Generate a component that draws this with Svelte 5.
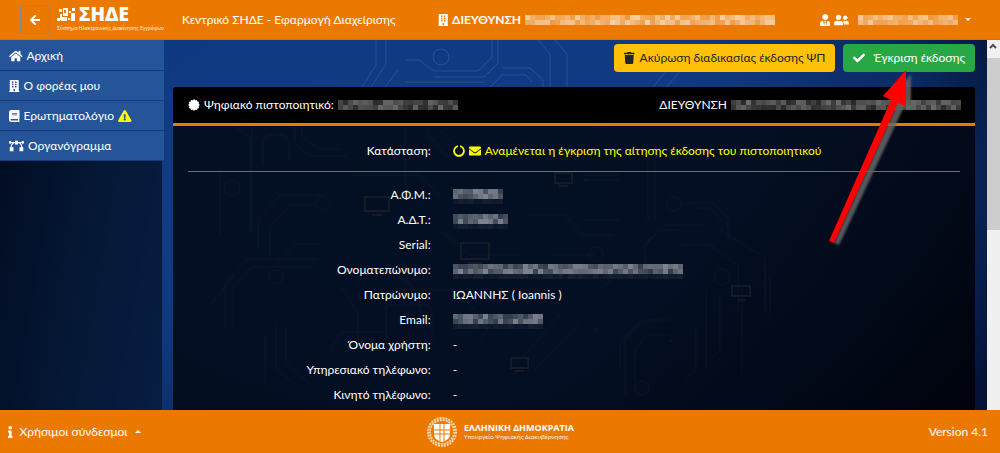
<script>
	const icons = {
		back: [448, 'M257.5 445.1l-22.2 22.2c-9.4 9.4-24.6 9.4-33.9 0L7 273c-9.4-9.4-9.4-24.6 0-33.9L201.4 44.7c9.4-9.4 24.6-9.4 33.9 0l22.2 22.2c9.5 9.5 9.3 25-.4 34.3L136.6 216H424c13.3 0 24 10.7 24 24v32c0 13.3-10.7 24-24 24H136.6l120.5 114.8c9.8 9.3 10 24.8.4 34.3z'],
		home: [576, 'M280.37 148.26L96 300.11V464a16 16 0 0 0 16 16l112.06-.29a16 16 0 0 0 15.92-16V368a16 16 0 0 1 16-16h64a16 16 0 0 1 16 16v95.64a16 16 0 0 0 16 16.05L464 480a16 16 0 0 0 16-16V300L295.67 148.26a12.19 12.19 0 0 0-15.3 0zM571.6 251.47L488 182.56V44.05a12 12 0 0 0-12-12h-56a12 12 0 0 0-12 12v72.61L318.47 43a48 48 0 0 0-61 0L4.34 251.47a12 12 0 0 0-1.6 16.9l25.5 31A12 12 0 0 0 45.15 301l235.22-193.74a12.19 12.19 0 0 1 15.3 0L530.9 301a12 12 0 0 0 16.9-1.6l25.5-31a12 12 0 0 0-1.7-16.93z'],
		building: [448, 'M436 480h-20V24c0-13-11-24-24-24H56C43 0 32 11 32 24v456H12c-7 0-12 5-12 12v20h448v-20c0-7-5-12-12-12zM128 64h64v64h-64zM256 64h64v64h-64zM128 160h64v64h-64zM256 160h64v64h-64zM128 256h64v64h-64zM256 256h64v64h-64zM192 384h64v96h-64z'],
		book: [448, 'M448 360V24c0-13.3-10.7-24-24-24H96C43 0 0 43 0 96v320c0 53 43 96 96 96h328c13.3 0 24-10.7 24-24v-16c0-7.5-3.5-14.3-8.9-18.7-4.2-15.4-4.2-59.3 0-74.7 5.4-4.3 8.9-11.1 8.9-18.6zM128 134c0-3.3 2.7-6 6-6h212c3.3 0 6 2.7 6 6v20c0 3.3-2.7 6-6 6H134c-3.3 0-6-2.7-6-6v-20zm0 64c0-3.3 2.7-6 6-6h212c3.3 0 6 2.7 6 6v20c0 3.3-2.7 6-6 6H134c-3.3 0-6-2.7-6-6v-20zm253.4 250H96c-17.7 0-32-14.3-32-32 0-17.6 14.4-32 32-32h285.4c-1.9 17.1-1.9 46.9 0 64z'],
		warning: [576, 'M569.5 440C588 472 564.800 512 527.900 512H48C11.100 512-11.900 472 6.500 440L246.400 24c18.500-32 64.700-32 83.200 0l239.900 416zM288 354c-25.400 0-46 20.600-46 46s20.600 46 46 46 46-20.600 46-46-20.600-46-46-46zm-43.700-165.300l7.400 136c.4 6.300 5.600 11.300 12 11.300h48.600c6.400 0 11.600-5 12-11.300l7.400-136c.4-6.900-5.100-12.700-12-12.700h-63.400c-6.900 0-12.400 5.800-12 12.700z'],
		curve: [640, 'M256 32h128v48h150a56 56 0 1 1 0 40h-52c56 42 84 104 91 184h35v176H448V304h76c-8-78-44-136-116-164h-24v52H256v-52h-24c-72 28-108 86-116 164h76v176H32V304h35c7-80 35-142 91-184h-52a56 56 0 1 1 0-40h150z'],
		check: [512, 'M173.900 439.400l-166.400-166.400c-10-10-10-26.200 0-36.200l36.200-36.200c10-10 26.200-10 36.200 0L192 312.700 432.100 72.600c10-10 26.200-10 36.200 0l36.200 36.200c10 10 10 26.200 0 36.200l-294.400 294.400c-10 10-26.200 10-36.200 0z'],
		trash: [448, 'M432 32H312l-9.4-18.7A24 24 0 0 0 281.1 0H166.800a23.720 23.720 0 0 0-21.4 13.3L136 32H16A16 16 0 0 0 0 48v32a16 16 0 0 0 16 16h416a16 16 0 0 0 16-16V48a16 16 0 0 0-16-16zM53.2 467a48 48 0 0 0 47.9 45h245.800a48 48 0 0 0 47.900-45L416 128H32z'],
		envelope: [512, 'M502.3 190.8c3.9-3.1 9.7-.2 9.7 4.7V400c0 26.5-21.5 48-48 48H48c-26.5 0-48-21.5-48-48V195.6c0-5 5.7-7.8 9.7-4.7 22.4 17.4 52.1 39.5 154.1 113.6 21.1 15.4 56.700 47.8 92.2 47.6 35.700.3 72-32.800 92.300-47.600 102-74.100 131.600-96.300 154-113.700zM256 320c23.200.4 56.600-29.200 73.400-41.400 132.700-96.300 142.800-104.700 173.400-128.700 5.800-4.500 9.200-11.500 9.200-18.900v-19c0-26.500-21.500-48-48-48H48c-26.500 0-48 21.500-48 48v19c0 7.400 3.400 14.300 9.200 18.900 30.600 23.900 40.700 32.400 173.400 128.700 16.800 12.200 50.200 41.800 73.400 41.400z'],
		notch: [512, 'M300 12v68c76 20 130 88 130 170 0 98-78 176-174 176S82 348 82 250c0-82 54-150 130-170V12C96 32 8 132 8 254c0 138 110 250 248 250s248-112 248-250C504 132 416 32 300 12z'],
		official: [448, 'M224 256c70.7 0 128-57.3 128-128S294.7 0 224 0 96 57.3 96 128s57.3 128 128 128zm95.8 32.6L272 480l-32-136 32-56h-96l32 56-32 136-47.8-191.4C56.9 292 0 350.3 0 422.4V464c0 26.500 21.500 48 48 48h352c26.500 0 48-21.500 48-48v-41.600c0-72.100-56.900-130.400-128.200-133.800z'],
		users: [640, 'M192 256c61.900 0 112-50.100 112-112S253.900 32 192 32 80 82.100 80 144s50.100 112 112 112zm76.800 32h-8.300c-20.800 10-43.900 16-68.500 16s-47.600-6-68.500-16h-8.300C51.600 288 0 339.600 0 403.200V432c0 26.500 21.500 48 48 48h288c26.500 0 48-21.500 48-48v-28.800c0-63.600-51.600-115.200-115.200-115.200zM480 256c53 0 96-43 96-96s-43-96-96-96-96 43-96 96 43 96 96 96zm48 32h-3.800c-13.900 4.800-28.600 8-44.200 8s-30.300-3.200-44.200-8H432c-20.400 0-39.200 5.900-55.700 15.400 24.400 26.300 39.700 61.200 39.700 99.800v38.400c0 2.200-.5 4.300-.6 6.400H592c26.500 0 48-21.500 48-48 0-61.900-50.100-112-112-112z'],
		info: [192, 'M20 424.200h20V279.800H20c-11 0-20-9-20-20V212c0-11 9-20 20-20h112c11 0 20 9 20 20v212.200h20c11 0 20 9 20 20V492c0 11-9 20-20 20H20c-11 0-20-9-20-20v-47.800c0-11 9-20 20-20zM96 0C56.200 0 24 32.200 24 72s32.200 72 72 72 72-32.200 72-72S135.800 0 96 0z'],
		seal: [512, sealPath()]
	}

	const menu = [
		{ icon: 'home', text: 'Αρχική' },
		{ icon: 'building', text: 'Ο φορέας μου' },
		{ icon: 'book', text: 'Ερωτηματολόγιο', warning: true },
		{ icon: 'curve', text: 'Οργανόγραμμα' }
	]

	// numbers are the masked lengths, in mosaic cells
	const details = [
		{ label: 'Α.Φ.Μ.:', mask: 10 },
		{ label: 'Α.Δ.Τ.:', mask: 11 },
		{ label: 'Serial:', value: '' },
		{ label: 'Ονοματεπώνυμο:', mask: 46 },
		{ label: 'Πατρώνυμο:', value: 'ΙΩΑΝΝΗΣ ( Ioannis )' },
		{ label: 'Email:', mask: 18 },
		{ label: 'Όνομα χρήστη:', value: '-' },
		{ label: 'Υπηρεσιακό τηλέφωνο:', value: '-' },
		{ label: 'Κινητό τηλέφωνο:', value: '-' }
	]

	function sealPath() {
		const points = []
		for (let i = 0; i < 24; i++) {
			const r = i % 2 ? 205 : 252
			const a = (i * Math.PI) / 12
			points.push(`${Math.round(256 + r * Math.cos(a))} ${Math.round(256 + r * Math.sin(a))}`)
		}
		return `M${points.join('L')}z`
	}

	function mosaic(cols, rows) {
		const cells = []
		let seed = cols * 97 + rows
		for (let y = 0; y < rows; y++) {
			for (let x = 0; x < cols; x++) {
				seed = (seed * 1103 + 12345) % 65536
				const edge = rows > 2 && y === rows - 1 ? 0.15 : 1
				cells.push({ x: x * 5, y: y * 5, o: (0.25 + (seed / 65536) * 0.4) * edge })
			}
		}
		return cells
	}
</script>

{#snippet icon(name)}
	<svg class="icon" viewBox="0 0 {icons[name][0]} 512" aria-hidden="true">
		<path d={icons[name][1]} fill-rule="evenodd" />
	</svg>
{/snippet}

{#snippet masked(cols, rows = 2)}
	<svg class="masked" width={cols * 5} height={rows * 5} aria-hidden="true" shape-rendering="crispEdges">
		{#each mosaic(cols, rows) as cell}
			<rect x={cell.x} y={cell.y} width="5" height="5" opacity={cell.o} />
		{/each}
	</svg>
{/snippet}

<div class="app">
	<header>
		<button class="back" aria-label="Πίσω">{@render icon('back')}</button>
		<a class="brand" href="#home">
			<span class="brand-name">
				<svg viewBox="0 0 20 14" width="20" height="14" aria-hidden="true">
					<path d="M2 1h3v3h-3zM6 0h5v8h-5zM0 10h3v3h-3zM3 6h2v6h-2zM4 9h6v4h-6zM12 3h2v2h-2zM15 0h3v3h-3zM14 5h4v8h-4zM11 10h2v2h-2z" />
					<path class="cut" d="M7 2h2v3h-2z" />
				</svg>
				<strong>ΣΗΔΕ</strong>
			</span>
			<small>Σύστημα Ηλεκτρονικής Διακίνησης Εγγράφων</small>
		</a>
		<span class="title">Κεντρικό ΣΗΔΕ - Εφαρμογή Διαχείρισης</span>
		<span class="org">{@render icon('building')} <b>ΔΙΕΥΘΥΝΣΗ</b> {@render masked(50)}</span>
		<button class="user" aria-label="Λογαριασμός">
			{@render icon('official')}{@render icon('users')}
			{@render masked(20)}
			<i class="caret"></i>
		</button>
	</header>

	<div class="stage">
		<svg class="circuit" viewBox="0 0 1000 370" preserveAspectRatio="xMidYMin slice" aria-hidden="true">
			<path class="faint" d="M376 0v25l-14 22M386 0v24l-18 28M398 30l-15 20M405 20h14l15 11h44l14-14V0M435 37h49l14-14V0M405 42h80M490 47l12-12h24l6 7M502 28h28l13 12v20M538 0l12 14v34M555 0l12 14v34M650 50l22-25M662 52l22-25M433 17a8 8 0 1 0 16 0a8 8 0 1 0-16 0" />
			<path d="M232 85l18 12v98M252 85v105M295 82v22l15 12h37M302 82v15l18 12h20M263 125v-22q0-8 9-8h8q9 0 9 8v19M315 165h-25l-20 22v30M322 155h-42l-22 25v30M318 204h-22l-25 24M210 265l25-30M225 289v-45l22-25h70M232 289v-42l20-20h60M220 130v65M265 295v50M276 285v43l22 20M286 285v38l25 22" />
			<path d="M405 90v55l15 20M425 90l20 25h50M440 90l15 15h65M350 135h70l20 22M395 230l25 25v35M340 245l18 28v40M400 250h55l20 20M330 310l12-18h40M386 265h38q8 0 8 8v26q0 8-8 8h-38zM530 175h35l18 20h30M550 215h45M440 190l30 25h50M480 300l22-30M520 320l40-45M535 330l45-48M490 260h35l12-12" />
			<path d="M585 135h35M585 140h35M585 180h35M648 105v75M655 105v75M685 163h28l15 15v25M695 168h15l12 13M665 185h38M638 214l14-18M645 225v-20l15-15h18M680 205h30l28 20v45M720 190l45 28v45M600 250l20-18h15M620 300l20-18h22M625 355v-55l18-20h28M620 330v-25l12-15M635 345v-35l12-15h24M696 285v45l-12 10M706 250v80M720 255v55l-10 10M742 250v85M765 230v45M770 235v40" />
			<circle cx="232" cy="148" r="8" /><circle cx="323" cy="163" r="7" /><circle cx="276" cy="237" r="7" />
			<circle cx="674" cy="164" r="7" /><circle cx="722" cy="237" r="8" /><circle cx="596" cy="214" r="7" />
			<circle cx="642" cy="348" r="7" /><circle cx="318" cy="204" r="1" /><circle cx="400" cy="250" r="1" />
			<circle cx="585" cy="140" r="1" /><circle cx="671" cy="301" r="1" /><circle cx="596" cy="289" r="1" />
			<path class="screens" d="M365 157h24v14h-24zM372 175h10M461 203h28v16h-28zM468 223h14M555 133h17v10h-17zM559 146h9M511 318h17v10h-17zM515 331h9M732 246h18v10h-18zM737 260h9" />
		</svg>

		<div class="layout">
			<nav>
				{#each menu as item}
					<a href="#{item.icon}">
						{@render icon(item.icon)}
						<span>{item.text}</span>
						{#if item.warning}<span class="alert">{@render icon('warning')}</span>{/if}
					</a>
				{/each}
			</nav>

			<main>
				<div class="actions">
					<button class="cancel">{@render icon('trash')} Ακύρωση διαδικασίας έκδοσης ΨΠ</button>
					<button class="approve">{@render icon('check')} <span>Έγκριση έκδοσης</span></button>
				</div>

				<section class="card">
					<div class="card-header">
						<span>{@render icon('seal')} Ψηφιακό πιστοποιητικό: {@render masked(24)}</span>
						<span>ΔΙΕΥΘΥΝΣΗ {@render masked(46)}</span>
					</div>
					<div class="card-body">
						<dl class="status">
							<dt>Κατάσταση:</dt>
							<dd>
								{@render icon('notch')}
								{@render icon('envelope')}
								Αναμένεται η έγκριση της αίτησης έκδοσης του πιστοποιητικού
							</dd>
						</dl>
						<dl class="details">
							{#each details as row}
								<dt>{row.label}</dt>
								<dd>
									{#if row.mask}{@render masked(row.mask, 3)}{:else}{row.value}{/if}
								</dd>
							{/each}
						</dl>
					</div>
				</section>
			</main>

			<div class="scrollbar">
				<svg viewBox="0 0 12 18" aria-hidden="true"><path d="M3 8l3-3 3 3" /></svg>
				<div class="thumb"></div>
			</div>
		</div>

		<svg class="pointer" viewBox="0 0 90 190" width="90" height="190" aria-hidden="true">
			<g class="shadow"><path d="M79 20L57 47l8 3L2 189l5 2L72 53l7 3z" /></g>
			<path d="M80 20L57 46l8 4L3 191l5 2L72 53l8 4z" />
		</svg>
	</div>

	<footer>
		<button class="links">{@render icon('info')} <span>Χρήσιμοι σύνδεσμοι</span> <i class="caret up"></i></button>
		<div class="state">
			<svg viewBox="0 0 32 32" width="32" height="32" aria-hidden="true">
				<g class="wreath">
					<circle cx="16" cy="16" r="14" />
					<circle cx="16" cy="16" r="12" />
				</g>
				<path d="M8 8h16v10q0 6-8 8-8-2-8-8z" />
				<path class="cross" d="M14 8v17M18 8v17M8 14h16M8 18h16" />
			</svg>
			<div>
				<strong>ΕΛΛΗΝΙΚΗ ΔΗΜΟΚΡΑΤΙΑ</strong>
				<small>Υπουργείο Ψηφιακής Διακυβέρνησης</small>
			</div>
		</div>
		<span class="version">Version 4.1</span>
	</footer>
</div>

<style>
	:global(body) {
		margin: 0;
	}

	.app {
		--orange: #eb7900;

		display: flex;
		flex-direction: column;
		height: 100vh;
		overflow: hidden;
		font: 12px/20px Lato, 'Open Sans', sans-serif;
		color: #fff;
	}

	button {
		font: inherit;
		color: inherit;
		background: none;
		border: 0;
		padding: 0;
		cursor: pointer;
	}

	a {
		color: inherit;
		text-decoration: none;
	}

	svg {
		flex: none;
	}

	.icon {
		height: 12px;
		fill: currentColor;
		vertical-align: -2px;
	}

	.masked {
		fill: #fff;
		vertical-align: -1px;
	}

	.caret {
		border: 3px solid transparent;
		border-top-color: #fff;
		border-bottom: 0;

		&.up {
			border-top: 0;
			border-bottom: 3px solid #fff;
		}
	}

	header {
		display: flex;
		align-items: center;
		height: 39px;
		padding: 0 29px 0 20px;
		background: var(--orange);
		border-bottom: 1px solid #d9730b;
	}

	.back {
		display: grid;
		place-content: center;
		width: 30px;
		height: 29px;
		border: 1px solid #7f8a98;
		border-radius: 3px;
	}

	.brand {
		display: flex;
		flex-direction: column;
		width: 106px;
		margin: 0 19px 0 7px;

		& .brand-name {
			display: flex;
			align-items: center;
			gap: 2px;
			height: 15px;
			fill: #fff;
		}

		& .cut {
			fill: var(--orange);
		}

		& strong {
			font: 800 19px/15px 'Open Sans', sans-serif;
		}

		& small {
			margin-top: 3px;
			font: 5px/7px 'Open Sans', sans-serif;
			white-space: nowrap;
		}
	}

	.title {
		white-space: nowrap;
	}

	.org {
		display: flex;
		align-items: center;
		gap: 4px;
		margin-left: 42px;
		white-space: nowrap;
	}

	.user {
		display: flex;
		align-items: center;
		gap: 4px;
		margin-left: auto;

		& .masked {
			margin: 0 3px 0 5px;
		}
	}

	.stage {
		position: relative;
		flex: 1;
		min-height: 0;
		display: grid;
		grid-template: minmax(0, 1fr) / minmax(0, 1fr);
		background: radial-gradient(ellipse 64% 110% at 42% 38%, #103d88 0, #103a80 50%, #0b2a62 80%, #041238 100%);
	}

	.circuit,
	.layout {
		grid-area: 1 / 1;
		width: 100%;
		height: 100%;
		min-height: 0;
	}

	.circuit {
		fill: none;
		stroke: #8fd0d8;
		stroke-opacity: 0.4;
		stroke-width: 1;

		& .faint {
			stroke: #5a9ac0;
			stroke-opacity: 0.25;
		}

		& .screens {
			stroke: #d5d2a5;
			stroke-opacity: 0.7;
			stroke-width: 2;
		}
	}

	.layout {
		display: flex;
		z-index: 1;
		overflow: hidden;
	}

	nav {
		width: 162px;
		flex: none;
		background: linear-gradient(100deg, #020b20, #051937 60%, #071d42);

		& a {
			display: flex;
			align-items: center;
			gap: 4px;
			height: 29px;
			margin-right: -2px;
			padding-left: 9px;
			background: #265499;
			border-bottom: 1px solid #163b7c;
		}

		& a:first-child {
			padding-top: 1px;
		}

		& .alert {
			color: #ff0;
		}
	}

	main {
		flex: 1;
		min-width: 0;
		display: flex;
		flex-direction: column;
		gap: 15px;
		padding: 4px 12px 0 11px;
	}

	.actions {
		display: flex;
		justify-content: flex-end;
		gap: 8px;

		& button {
			display: flex;
			align-items: center;
			gap: 5px;
			height: 28px;
			padding: 0 10px;
			border-radius: 4px;
			white-space: nowrap;
		}

		& .cancel {
			color: #212529;
			background: #ffc107;
		}

		& .approve {
			gap: 8px;
			background: #28a745;
		}
	}

	.card {
		flex: 1;
		display: flex;
		flex-direction: column;
		border-radius: 3px 3px 0 0;
		overflow: hidden;
	}

	.card-header {
		display: flex;
		justify-content: space-between;
		padding: 8px 14px 8px 15px;
		background: #000;
		border-bottom: 3px solid var(--orange);
		white-space: nowrap;

		& span {
			display: flex;
			align-items: center;
			gap: 4px;
		}

		& .masked {
			opacity: 0.65;
		}
	}

	.card-body {
		flex: 1;
		padding: 15px 15px 0;
		background: linear-gradient(135deg, rgba(2, 9, 22, 0.88), rgba(2, 9, 22, 0.88) 60%, rgba(0, 2, 10, 0.93));
	}

	dl {
		display: grid;
		grid-template-columns: 1fr 2fr;
		margin: 0 -11px;
		line-height: 20px;

		& dt {
			padding: 0 11px;
			text-align: right;
		}

		& dd {
			margin: 0;
			padding: 0 11px;
			white-space: nowrap;
		}

		& .masked {
			opacity: 0.75;
			vertical-align: -5px;
		}
	}

	.status {
		padding-bottom: 11px;
		background: linear-gradient(#66707c, #66707c) 11px 100% / calc(100% - 22px) 1px no-repeat;

		& dd {
			display: flex;
			align-items: center;
			gap: 4px;
			color: #ff0;
		}
	}

	.details {
		grid-auto-rows: 25px;
		margin-top: 10px;
		line-height: 25px;
	}

	.scrollbar {
		width: 13px;
		flex: none;
		background: #f0f0f0;

		& svg {
			display: block;
			width: 12px;
			height: 18px;
			fill: none;
			stroke: #505050;
			stroke-width: 2;
		}

		& .thumb {
			height: 172px;
			background: #cdcdcd;
		}
	}

	.pointer {
		position: absolute;
		z-index: 2;
		top: 10px;
		right: 84px;
		overflow: visible;
		fill: #f00;
		pointer-events: none;

		& .shadow {
			fill: #666;
			opacity: 0.85;
			filter: blur(1px);
			transform: translate(6px, 4px);
		}
	}

	footer {
		display: grid;
		grid-template-columns: 1fr auto 1fr;
		align-items: center;
		height: 43px;
		padding: 0 8px;
		background: var(--orange);
	}

	.links {
		display: flex;
		align-items: center;
		gap: 7px;
	}

	.state {
		display: flex;
		align-items: center;
		gap: 6px;
		fill: #fff;

		& .wreath {
			fill: none;
			stroke: #fbd9b0;
			stroke-width: 2;
			stroke-dasharray: 2 1;
		}

		& .cross {
			stroke: var(--orange);
			stroke-width: 1;
		}

		& div {
			display: flex;
			flex-direction: column;
		}

		& strong {
			font: 700 9px/11px 'Open Sans', sans-serif;
		}

		& small {
			font: 6px/8px 'Open Sans', sans-serif;
		}
	}

	.version {
		padding-right: 4px;
		text-align: right;
	}
</style>
